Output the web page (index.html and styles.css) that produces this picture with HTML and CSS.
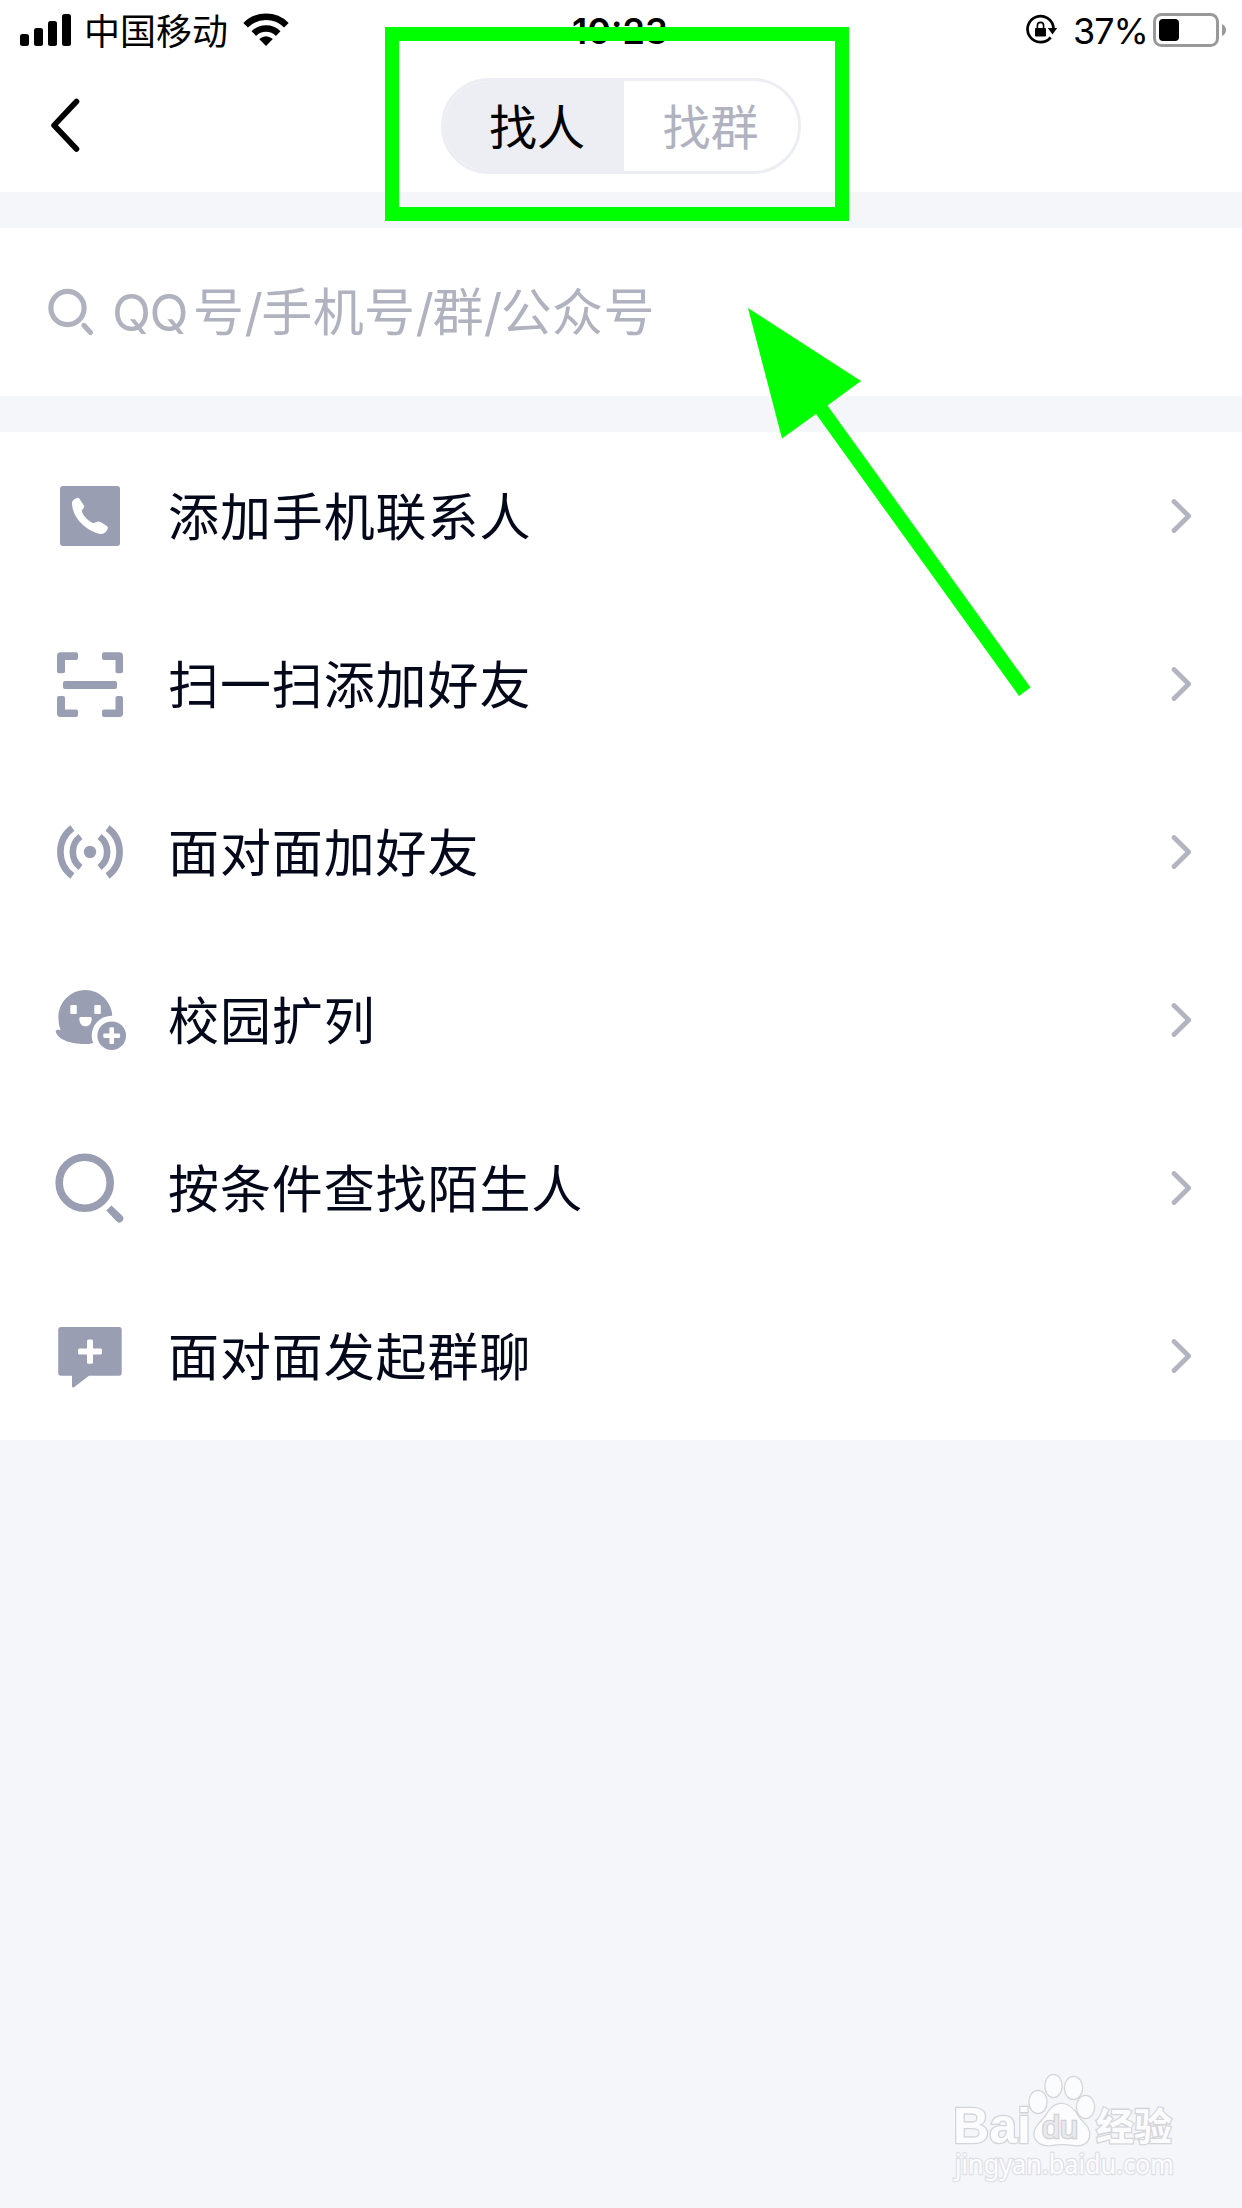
FILE: index.html
```html
<!DOCTYPE html>
<html lang="zh-CN">
  <head>
    <meta charset="UTF-8" />
    <meta name="viewport" content="width=device-width, initial-scale=1.0" />
    <title>添加</title>
    <link rel="stylesheet" href="styles.css">
  </head>
  <body>
    <div class="page">
      <div class="status">
        <svg class="signal" width="52" height="34" viewBox="0 0 52 34">
          <rect x="0" y="21" width="9" height="12" rx="2.5" />
          <rect x="14" y="15" width="9" height="18" rx="2.5" />
          <rect x="28" y="8" width="9" height="25" rx="2.5" />
          <rect x="42" y="1" width="9" height="32" rx="2.5" />
        </svg>
        <span class="carrier">中国移动</span>
        <svg class="wifi" width="46" height="34" viewBox="0 0 46 34">
          <path d="M2.6 12.2A29 29 0 0 1 43.4 12.2" />
          <path d="M10.8 20.6A17.3 17.3 0 0 1 35.2 20.6" />
          <path class="solid" d="M23 33L16.2 26Q23 20.4 29.8 26Z" />
        </svg>
        <span class="time">10:23</span>
        <svg class="lock" width="34" height="32" viewBox="0 0 34 32">
          <path d="M25.7 23.3A13 13 0 1 1 28.5 14" />
          <path class="solid" d="M22.8 14H32.2L27.5 20.5Z" />
          <rect x="10" y="14" width="11" height="8.5" rx="1" />
          <path class="shackle" d="M12.4 15V11.5A3.1 3.1 0 0 1 18.6 11.5V15" />
        </svg>
        <span class="percent">37%</span>
        <svg class="battery" width="74" height="34" viewBox="0 0 74 34">
          <rect class="shell" x="1.5" y="1.5" width="63" height="31" rx="7" />
          <rect x="6" y="6" width="20" height="22" rx="4" />
          <path class="cap" d="M69 11Q73 13 73 17T69 23Z" />
        </svg>
      </div>

      <div class="nav">
        <svg class="back" width="30" height="54" viewBox="0 0 30 54">
          <path d="M26.5 3.5L4 27.3L26.5 51" />
        </svg>
        <div class="tabs">
          <span class="tab active">找人</span>
          <span class="tab">找群</span>
        </div>
      </div>

      <div class="search">
        <svg width="48" height="50" viewBox="0 0 48 50">
          <circle cx="19.5" cy="21" r="16.6" />
          <path d="M36 38.5L42.5 45.500" />
        </svg>
        <p><span class="qq">QQ</span>号<i>/</i>手机号<i>/</i>群<i>/</i>公众号</p>
      </div>

      <ul class="list">
        <li>
          <svg class="icon" viewBox="0 0 72 72">
            <rect x="6" y="6" width="60" height="60" rx="3" />
            <path class="hollow" d="M18 23C18 20.5 21 18.8 23 17.8Q24.6 17.3 25.6 19L30 25.5Q30.6 26.7 29.6 28L27.7 30.8C29 36 34.5 41.5 39.3 43.2L44 41.6Q45.3 41.2 46.6 42L52.8 46Q54.6 47.3 53.6 49C52.3 52 50 54.3 46.5 53.9C32.5 51.5 18 37.5 18 23Z" />
          </svg>
          <span>添加手机联系人</span>
          <svg class="arrow" viewBox="0 0 24 36"><path d="M4 3.5L18.7 18L4 32.5" /></svg>
        </li>
        <li>
          <svg class="icon" viewBox="0 0 72 72">
            <path d="M24 6V10Q24 12 22 12H11V23.5Q11 25.3 9 25.3H5Q3 25.3 3 23.5V8Q3 4.3 6.5 4.3H22Q24 4.3 24 6Z" />
            <path d="M48 6V10Q48 12 50 12H61.5V23.5Q61.5 25.3 63.5 25.3H67Q69 25.3 69 23.5V8Q69 4.3 65.5 4.3H50Q48 4.3 48 6Z" />
            <path d="M24 67.3V63.5Q24 61.5 22 61.5H11V50Q11 48 9 48H5Q3 48 3 50V65.5Q3 69 6.5 69H22Q24 69 24 67.3Z" />
            <path d="M48 67.3V63.5Q48 61.5 50 61.5H61.5V50Q61.5 48 63.5 48H67Q69 48 69 50V65.5Q69 69 65.5 69H50Q48 69 48 67.3Z" />
            <rect x="9" y="33" width="54" height="8" rx="2" />
          </svg>
          <span>扫一扫添加好友</span>
          <svg class="arrow" viewBox="0 0 24 36"><path d="M4 3.5L18.7 18L4 32.5" /></svg>
        </li>
        <li>
          <svg class="icon" viewBox="0 0 72 72">
            <circle cx="36" cy="36" r="6.2" />
            <path class="wave" d="M18.4 12A30 30 0 0 0 18.4 60M53.6 12A30 30 0 0 1 53.6 60" />
            <path class="wave" d="M26.5 20.5A19.5 19.5 0 0 0 26.5 51.5M45.5 20.5A19.5 19.5 0 0 1 45.5 51.5" />
          </svg>
          <span>面对面加好友</span>
          <svg class="arrow" viewBox="0 0 24 36"><path d="M4 3.5L18.7 18L4 32.5" /></svg>
        </li>
        <li>
          <svg class="icon" viewBox="0 0 72 72">
            <path d="M6.5 46Q4.3 40 4.3 33A27 27 0 0 1 58.3 33V45L42 58Q38 60 31 60C17 60 4 56 1.7 47.5Q2 45.5 4 45.7Z" />
            <rect class="hollow" x="16.3" y="21" width="6.5" height="9" rx="1" />
            <rect class="hollow" x="40.3" y="21" width="6.5" height="9" rx="1" />
            <path class="hollow" d="M26.3 33H36.7Q37.7 33 37.7 34.5C37.7 39.5 35 42.3 31.5 42.3S25.3 39.5 25.3 34.5Q25.3 33 26.3 33Z" />
            <circle class="hollow" cx="57.7" cy="51.7" r="20" />
            <circle cx="57.7" cy="51.7" r="14.3" />
            <rect class="hollow" x="49.3" y="49.4" width="16.8" height="4.6" rx="1.2" />
            <rect class="hollow" x="55.4" y="43.3" width="4.6" height="16.8" rx="1.2" />
          </svg>
          <span>校园扩列</span>
          <svg class="arrow" viewBox="0 0 24 36"><path d="M4 3.5L18.7 18L4 32.5" /></svg>
        </li>
        <li>
          <svg class="icon" viewBox="0 0 72 72">
            <circle class="ring" cx="30.7" cy="30.7" r="25.5" />
            <path d="M57.5 53.5L68 63.5A3.9 3.9 0 0 1 62.5 69.3L52.3 58.6Z" />
          </svg>
          <span>按条件查找陌生人</span>
          <svg class="arrow" viewBox="0 0 24 36"><path d="M4 3.5L18.7 18L4 32.5" /></svg>
        </li>
        <li>
          <svg class="icon" viewBox="0 0 72 72">
            <path d="M7 7H65Q67.7 7 67.7 10V53Q67.7 55.8 65 55.8H35L20 67.2Q18 68.2 18 66V55.8H7Q4.2 55.8 4.2 53V10Q4.2 7 7 7Z" />
            <rect class="hollow" x="24" y="28.6" width="24" height="6" rx="1.5" />
            <rect class="hollow" x="33" y="19.4" width="6" height="24.4" rx="1.5" />
          </svg>
          <span>面对面发起群聊</span>
          <svg class="arrow" viewBox="0 0 24 36"><path d="M4 3.5L18.7 18L4 32.5" /></svg>
        </li>
      </ul>

      <!-- 标注 -->
      <div class="mark_box"></div>
      <svg class="mark_arrow" width="284" height="390" viewBox="0 0 284 390">
        <path d="M0 0L113 73L79.5 97.5L282.5 379.5L271 388L68 106L34 130.5Z" />
      </svg>

      <!-- 水印 -->
      <svg class="watermark" width="240" height="120" viewBox="0 0 240 120">
        <g class="brand">
          <text x="3" y="73" font-size="50" textLength="78" lengthAdjust="spacingAndGlyphs">Bai</text>
          <ellipse cx="88" cy="32" rx="8.5" ry="11" />
          <ellipse cx="103.500" cy="16" rx="8" ry="11" />
          <ellipse cx="123.500" cy="18" rx="8.5" ry="11" />
          <ellipse cx="135.500" cy="37" rx="8.5" ry="11" />
          <path d="M111.500 34C120 34 125 41 129 48C134 54 140 58 139 66C138 74 130 76 124 75Q112 73 101 75C94 76 85 73 84.500 64C85 56 91 53 96 46C100 39 104 34 111.500 34Z" />
          <text class="du" x="92" y="68" font-size="31" textLength="36" lengthAdjust="spacingAndGlyphs">du</text>
          <text class="exp" x="146" y="70" font-size="38" textLength="76">经验</text>
        </g>
        <text class="site" x="5" y="104" font-size="27" textLength="219" lengthAdjust="spacingAndGlyphs">jingyan.baidu.com</text>
      </svg>
    </div>
  </body>
</html>
```

FILE: styles.css
```css
* {
  margin: 0;
  padding: 0;
  box-sizing: border-box;
}
body {
  font-family: "Inter", "Noto Sans CJK SC", sans-serif;
  color: #03081a;
  background: #f4f6fa;
}
svg {
  display: block;
  flex-shrink: 0;
}
li {
  list-style-type: none;
}
.page {
  position: relative;
  width: 1242px;
  height: 2208px;
  overflow: hidden;
}

/* 状态栏 */
.status {
  display: flex;
  align-items: center;
  height: 60px;
  padding: 0 15px 0 20px;
  background: #fff;
  color: #000;
  font-size: 36px;
  line-height: 60px;
}
.carrier {
  width: 144px;
  height: 60px;
  margin-left: 12px;
  font-family: "Noto Sans CJK SC", sans-serif;
  line-height: 58px;
}
.wifi {
  margin-left: 15px;
}
.wifi path {
  fill: none;
  stroke: #000;
  stroke-width: 6.5;
}
.wifi .solid,
.lock .solid {
  fill: #000;
  stroke: none;
}
.time {
  width: 100px;
  height: 60px;
  margin-left: 281px;
  font-weight: 600;
  line-height: 62px;
  text-align: center;
  white-space: nowrap;
}
.lock {
  margin-left: auto;
}
.lock path {
  fill: none;
  stroke: #000;
  stroke-width: 2.7;
}
.lock .shackle {
  stroke-width: 1.6;
}
.percent {
  width: 73px;
  height: 60px;
  margin: 0 7px 0 14px;
  line-height: 62px;
  white-space: nowrap;
  letter-spacing: -1px;
}
.battery .shell {
  fill: none;
  stroke: #999;
  stroke-width: 3;
}
.battery .cap {
  fill: #999;
}

/* 导航 */
.nav {
  display: flex;
  align-items: flex-start;
  height: 132px;
  padding: 18px 0 0 50px;
  background: #fff;
}
.back {
  margin-top: 20px;
}
.back path {
  fill: none;
  stroke: #000;
  stroke-width: 5.6;
  stroke-linecap: round;
  stroke-linejoin: round;
}
.tabs {
  display: flex;
  width: 360px;
  height: 96px;
  margin-left: 361px;
  border: 3px solid #edeef4;
  border-radius: 48px;
  overflow: hidden;
}
.tab {
  flex: 1;
  padding-right: 1px;
  color: #b0b3bf;
  font-family: "Noto Sans CJK SC", sans-serif;
  font-size: 48px;
  line-height: 86px;
  text-align: center;
}
.tab.active {
  flex: 0 0 180px;
  padding: 0 0 0 6px;
  background: #edeef4;
  color: #000;
}

/* 搜索 */
.search {
  display: flex;
  align-items: center;
  height: 168px;
  margin: 36px 0;
  padding-left: 48px;
  background: #fff;
  color: #b0b3bf;
  font-size: 51px;
  line-height: 72px;
}
.search svg circle,
.search svg path {
  fill: none;
  stroke: #b0b3bf;
  stroke-width: 5.2;
  stroke-linecap: round;
}
.search p {
  margin-left: 16px;
  padding-top: 2px;
  letter-spacing: 0.4px;
}
.search .qq {
  margin-right: 6px;
  letter-spacing: -1.5px;
}
.search i {
  font-style: normal;
  letter-spacing: -1.5px;
}

/* 列表 */
.list {
  background: #fff;
}
.list li {
  display: flex;
  align-items: center;
  height: 168px;
  padding: 0 48px 0 54px;
}
.list span {
  flex: 1;
  margin-left: 42px;
  padding-bottom: 4px;
  font-family: "Noto Sans CJK SC", sans-serif;
  font-size: 51px;
  line-height: 72px;
  letter-spacing: 0.9px;
}
.icon {
  width: 72px;
  height: 72px;
  overflow: visible;
  fill: #999eb3;
}
.icon .hollow {
  fill: #fff;
}
.icon .wave {
  fill: none;
  stroke: #999eb3;
  stroke-width: 6.6;
}
.icon .ring {
  fill: none;
  stroke: #999eb3;
  stroke-width: 7.6;
}
.arrow {
  width: 24px;
  height: 36px;
}
.arrow path {
  fill: none;
  stroke: #b2b4c1;
  stroke-width: 4.8;
  stroke-linecap: round;
  stroke-linejoin: round;
}

/* 标注 */
.mark_box {
  position: absolute;
  left: 385px;
  top: 27px;
  width: 464px;
  height: 194px;
  border: 14px solid #0f0;
}
.mark_arrow {
  position: absolute;
  left: 748px;
  top: 308px;
  fill: #0f0;
}

/* 水印 */
.watermark {
  position: absolute;
  left: 950px;
  top: 2070px;
  fill: #fcfcfe;
  stroke: #d4d5d9;
  stroke-width: 2.6px;
  paint-order: stroke;
}
.brand {
  font-family: "Liberation Sans", sans-serif;
  font-weight: bold;
}
.brand .du {
  fill: #e9eaee;
  stroke: #d0d1d5;
  font-weight: normal;
}
.brand .exp {
  font-family: "Noto Sans CJK SC", sans-serif;
}
.site {
  font-family: "Noto Sans", sans-serif;
  stroke: #dfe0e5;
}
```
